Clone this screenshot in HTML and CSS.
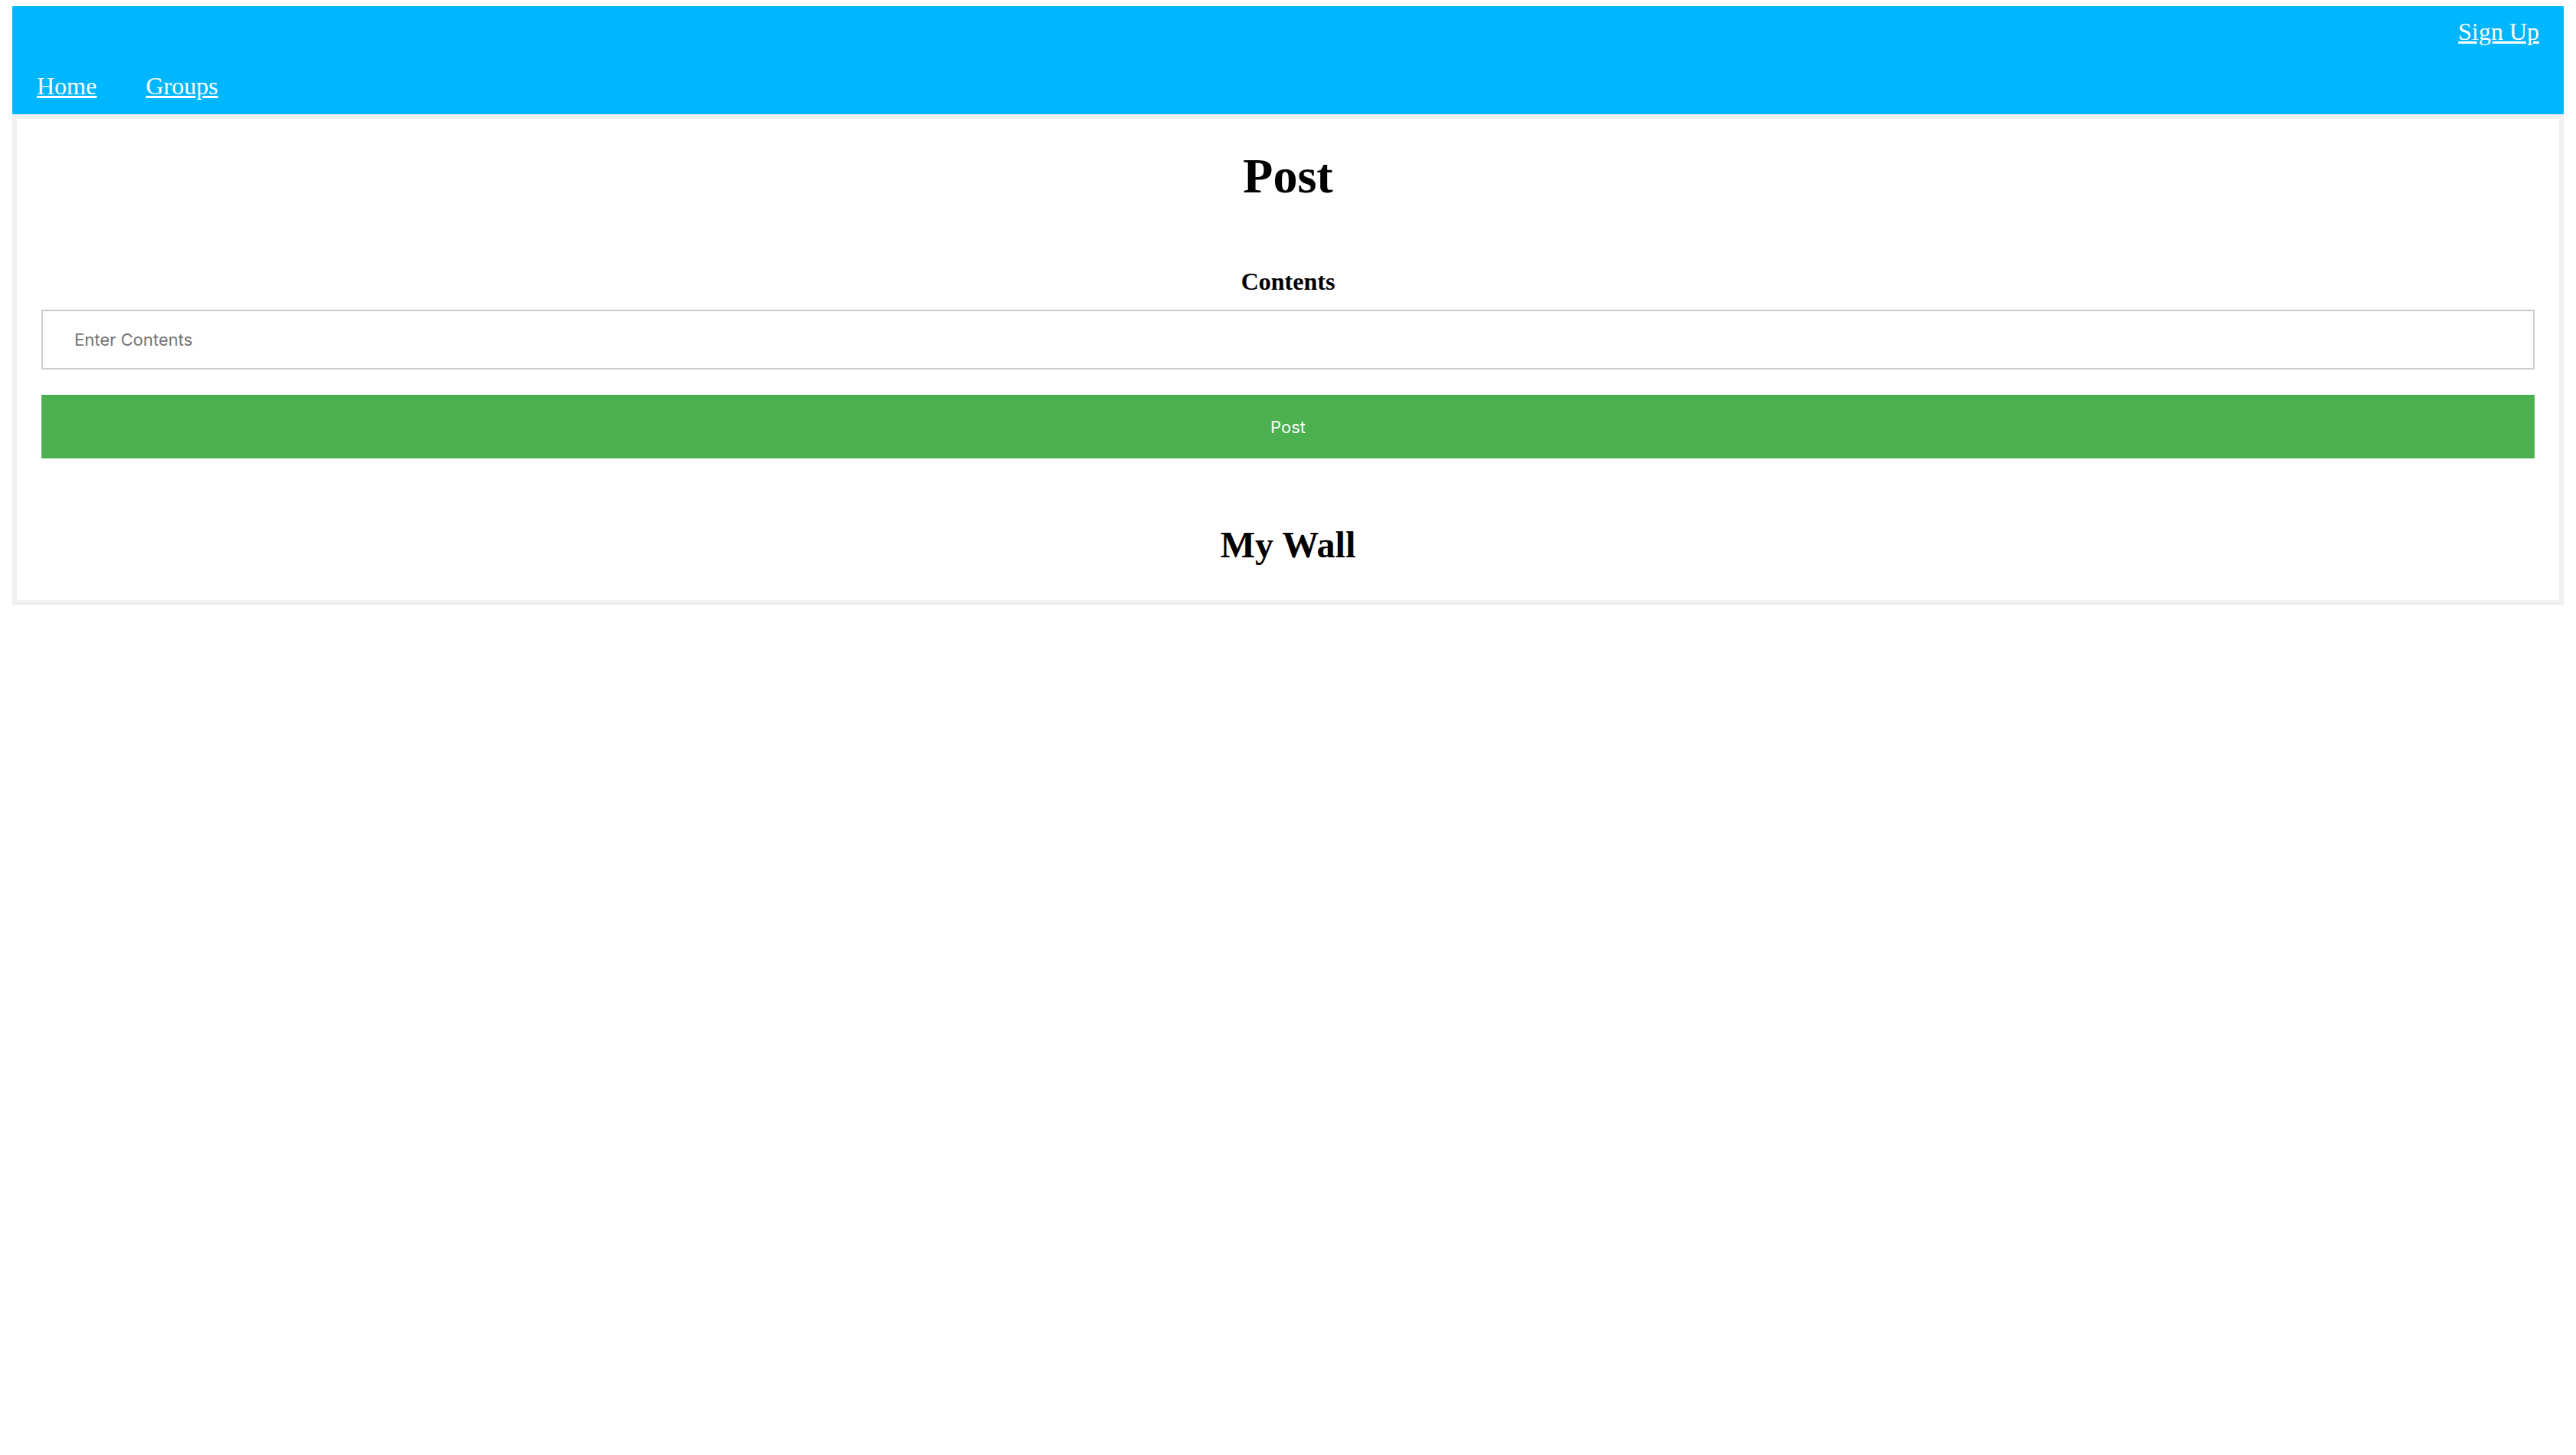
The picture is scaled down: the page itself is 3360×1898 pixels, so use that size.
FILE: index.html
```html
<!DOCTYPE html>
<html lang="en">
<head>
<meta charset="utf-8">
<title>Post</title>
<link rel="stylesheet" href="styles.css">
</head>
<body>
<header class="topbar">
  <div class="topbar-right"><a class="nav-link" href="#">Sign Up</a></div>
  <nav class="nav">
    <a class="nav-link" href="#">Home</a>
    <a class="nav-link" href="#">Groups</a>
  </nav>
</header>
<main class="panel">
  <h1 class="title">Post</h1>
  <form class="post-form">
    <label class="field-label" for="contents">Contents</label>
    <input class="field-input" id="contents" type="text" placeholder="Enter Contents">
    <button class="post-btn" type="button">Post</button>
  </form>
  <h2 class="wall-title">My Wall</h2>
</main>
</body>
</html>
```
FILE: styles.css
```css
html, body {
  background: #ffffff;
}
body {
  margin: 8px 16px;
  font-family: "Liberation Serif", "Times New Roman", serif;
  color: #000;
}
.topbar {
  background: #00b7ff;
  height: 141px;
  box-sizing: border-box;
  padding: 15px 32px 18px;
  display: flex;
  flex-direction: column;
}
.topbar-right {
  display: flex;
  justify-content: flex-end;
  height: 37px;
}
.nav {
  display: flex;
  gap: 64px;
  margin-top: 34px;
  height: 37px;
}
.nav-link {
  color: #ffffff;
  font-size: 32px;
  line-height: 37px;
  text-decoration: underline;
}
.panel {
  border: 6px solid #efefef;
  padding: 0 32px 45px;
  display: flex;
  flex-direction: column;
}
.title {
  font-size: 64px;
  line-height: 74px;
  font-weight: bold;
  text-align: center;
  margin: 38px 0 0;
}
.post-form {
  display: flex;
  flex-direction: column;
}
.field-label {
  font-size: 32px;
  line-height: 37px;
  font-weight: bold;
  text-align: center;
  margin-top: 82px;
}
.field-input {
  margin-top: 18px;
  height: 78px;
  box-sizing: border-box;
  border: 2px solid #cccccc;
  padding: 0 41px;
  font-family: "Inter", "Liberation Sans", sans-serif;
  font-size: 22px;
  color: #333;
  outline: none;
  border-radius: 0;
}
.field-input::placeholder {
  color: #757575;
}
.post-btn {
  margin-top: 33px;
  height: 83px;
  border: none;
  border-radius: 0;
  background: #4caf50;
  color: #ffffff;
  font-family: "Inter", "Liberation Sans", sans-serif;
  font-size: 22px;
  cursor: pointer;
}
.wall-title {
  font-size: 48px;
  line-height: 55px;
  font-weight: bold;
  text-align: center;
  margin: 85px 0 0;
}
```
